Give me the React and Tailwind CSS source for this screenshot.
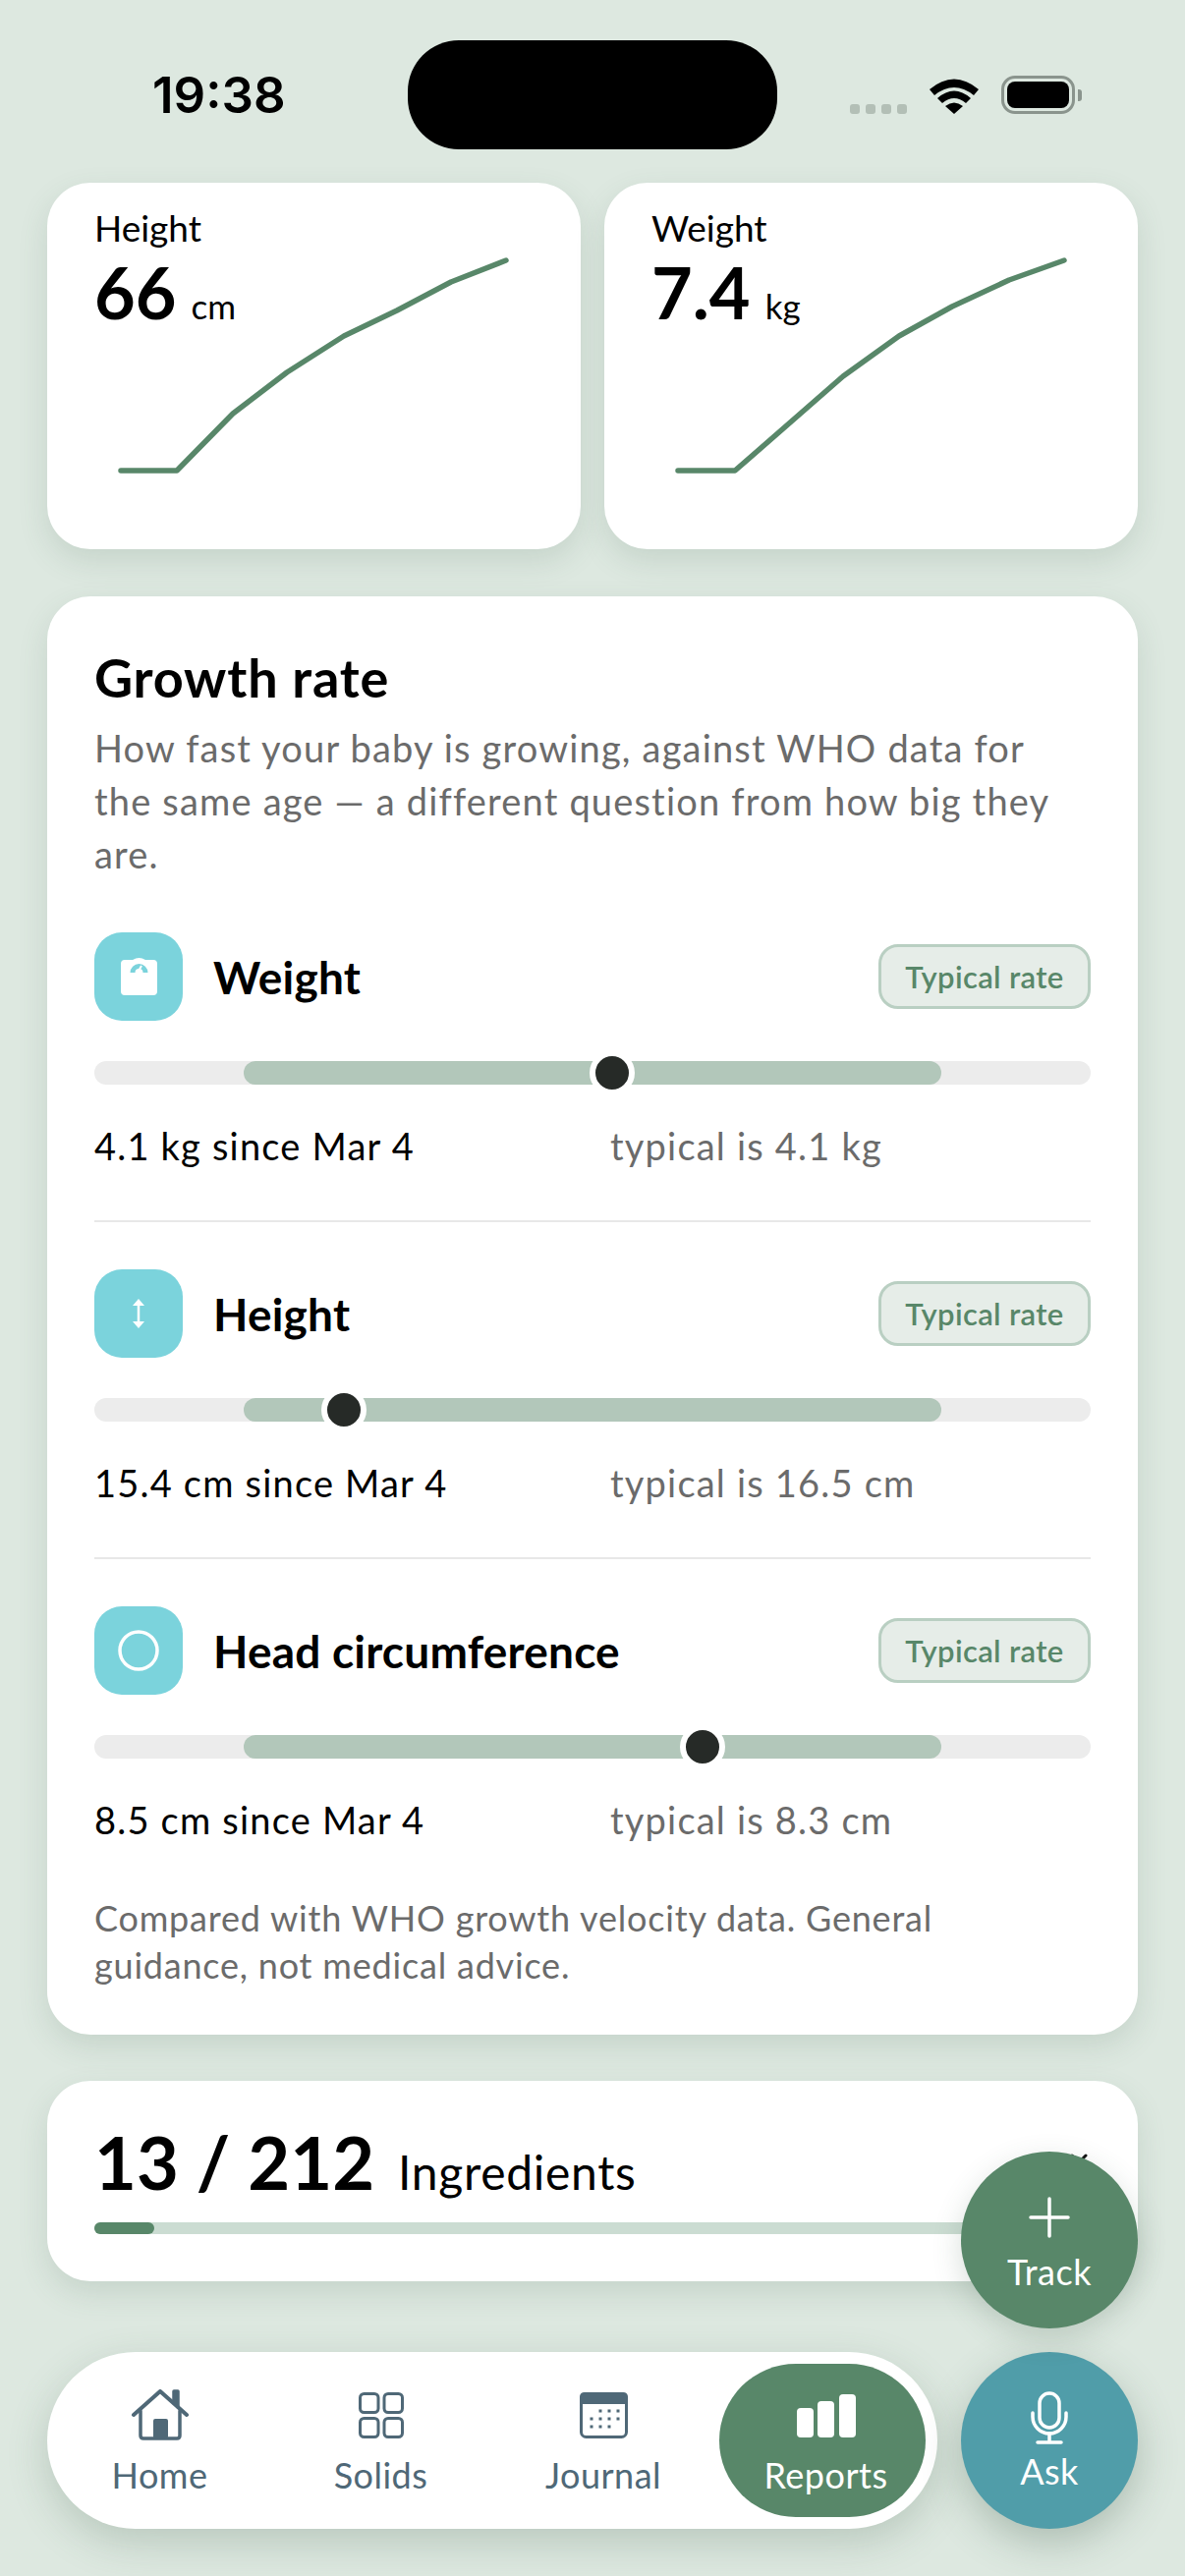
import React from 'react'

const GREEN = '#588769'

function StatusBar() {
  return (
    <div className="flex h-[111px] mt-[41px] mb-[34px] pl-[155px] items-center">
      <span className="w-[260px] mt-[2px] text-[51px] font-semibold text-black font-['Inter',sans-serif]">19:38</span>
      <div className="w-[376px] h-[111px] rounded-[52px] bg-black" />
      <div className="flex gap-[6px] ml-[74px] mt-[29px]">
        <span className="w-[10px] h-[10px] rounded-[3px] bg-[#b3bfb6]" />
        <span className="w-[10px] h-[10px] rounded-[3px] bg-[#b3bfb6]" />
        <span className="w-[10px] h-[10px] rounded-[3px] bg-[#b3bfb6]" />
        <span className="w-[10px] h-[10px] rounded-[3px] bg-[#b3bfb6]" />
      </div>
      <svg width="52" height="38" viewBox="0 0 52 38" className="ml-[22px] mt-[1px]">
        <path d="M1 13 Q26 -8 51 13 L46 19 Q26 3 6 19 Z" fill="#000" />
        <path d="M9 22 Q26 7 43 22 L38 27 Q26 17 14 27 Z" fill="#000" />
        <path d="M17 30 Q26 23 35 30 L26 38 Z" fill="#000" />
      </svg>
      <div className="flex items-center ml-[22px]">
        <div className="w-[75px] h-[39px] rounded-[14px] border-[3px] border-[#8a948d] p-[3px]">
          <div className="w-full h-full rounded-[8px] bg-black" />
        </div>
        <div className="w-[4px] h-[12px] ml-[3px] rounded-r-[3px] bg-[#8a948d]" />
      </div>
    </div>
  )
}

function StatCard({ label, value, unit, points }) {
  return (
    <div className="relative flex-1 h-[373px] rounded-[44px] bg-white pl-[48px] pt-[21px] shadow-[0_12px_30px_rgba(70,100,80,0.15)]">
      <div className="text-[37px] leading-[50px] text-black">{label}</div>
      <div className="flex items-baseline gap-[15px] leading-[80px] text-black">
        <span className="text-[72px] font-bold">{value}</span>
        <span className="text-[35px]">{unit}</span>
      </div>
      <svg viewBox="0 0 543 373" className="absolute inset-0 w-full h-full" fill="none">
        <polyline points={points} stroke={GREEN} strokeWidth="5.5" strokeLinecap="round" strokeLinejoin="round" />
      </svg>
    </div>
  )
}

function WeightIcon() {
  return (
    <svg width="37" height="38" viewBox="0 0 37 38" fill="none">
      <path d="M4 2 H12 Q18.5 -2 25 2 H33 Q37 2 37 6 V34 Q37 38 33 38 H4 Q0 38 0 34 V6 Q0 2 4 2 Z" fill="#fff" />
      <path d="M12 15 A6.5 6.5 0 0 1 25 15" stroke="#7bd3dc" strokeWidth="5" />
      <path d="M17 15 L21 8" stroke="#fff" strokeWidth="2" />
    </svg>
  )
}

function HeightIcon() {
  return (
    <svg width="14" height="30" viewBox="0 0 14 30">
      <path d="M7 0 L13 7 H1 Z M7 30 L13 23 H1 Z" fill="#fff" />
      <path d="M7 5 V25" stroke="#fff" strokeWidth="2.5" />
    </svg>
  )
}

function CircleIcon() {
  return (
    <svg width="42" height="42" viewBox="0 0 42 42" fill="none">
      <circle cx="21" cy="21" r="19" stroke="#fff" strokeWidth="3.5" />
    </svg>
  )
}

function RateRow({ icon, title, pct, left, right }) {
  return (
    <div>
      <div className="flex items-center justify-between h-[90px]">
        <div className="flex items-center gap-[31px]">
          <div className="flex w-[90px] h-[90px] items-center justify-center rounded-[28px] bg-[#7bd3dc]">{icon}</div>
          <span className="text-[46px] font-bold text-black tracking-[0.2px]">{title}</span>
        </div>
        <div className="flex w-[216px] h-[66px] items-center justify-center rounded-[20px] border-[3px] border-[#b9cfc2] bg-[#e6ede8] text-[31px] font-semibold text-[#588769] tracking-[0.35px]">Typical rate</div>
      </div>
      <div className="relative h-[24px] mt-[41px] rounded-full bg-[#ececec]">
        <div className="absolute left-[15%] right-[15%] top-0 bottom-0 rounded-full bg-[#b2c7ba]" />
        <div className="absolute top-[-11px] w-[46px] h-[46px] -ml-[23px] rounded-full border-[6px] border-white bg-[#262a27]" style={{ left: `${pct}%` }} />
      </div>
      <div className="grid grid-cols-2 gap-[36px] mt-[37px] text-[38px] leading-[50px] tracking-[1.2px]">
        <span className="text-black">{left}</span>
        <span className="text-[#6b6b6b]">{right}</span>
      </div>
    </div>
  )
}

function HomeIcon() {
  return (
    <svg width="60" height="52" viewBox="0 0 60 52" fill="none" stroke="#4f6877" strokeWidth="3.5" strokeLinecap="round" strokeLinejoin="round">
      <path d="M3 26 L30 2 L57 26" strokeWidth="4" />
      <path d="M10 22 V47 Q10 50 13 50 H47 Q50 50 50 47 V22" />
      <path d="M44 14 V2 H48 V18" fill="#4f6877" />
      <rect x="23" y="30" width="15" height="20" rx="2" fill="#4f6877" stroke="none" />
    </svg>
  )
}

function SolidsIcon() {
  return (
    <svg width="46" height="47" viewBox="0 0 46 47" fill="none" stroke="#4f6877" strokeWidth="3" className="mt-[3px]">
      <rect x="1.5" y="1.5" width="18.5" height="19" rx="4" />
      <rect x="26" y="1.5" width="18.5" height="19" rx="4" />
      <rect x="1.5" y="26.5" width="18.5" height="19" rx="4" />
      <rect x="26" y="26.5" width="18.5" height="19" rx="4" />
    </svg>
  )
}

function JournalIcon() {
  const dots = [[21, 19], [30, 19], [39, 19], [12, 27], [21, 27], [30, 27], [39, 27], [12, 35], [21, 35], [30, 35]]
  return (
    <svg width="49" height="47" viewBox="0 0 49 47" fill="none" className="mt-[3px]">
      <rect x="1.5" y="1.5" width="46" height="44" rx="5" stroke="#4f6877" strokeWidth="3" />
      <path d="M5 0 H44 Q49 0 49 5 V12 H0 V5 Q0 0 5 0 Z" fill="#4f6877" />
      {dots.map(([x, y]) => (
        <rect key={`${x}-${y}`} x={x - 1.5} y={y - 1.5} width="3" height="3" fill="#4f6877" />
      ))}
    </svg>
  )
}

function ReportsIcon() {
  return (
    <svg width="60" height="44" viewBox="0 0 60 44" fill="#fff" className="mt-[5px]">
      <rect x="0" y="14" width="17" height="30" rx="4" />
      <rect x="21" y="7" width="17" height="37" rx="4" />
      <rect x="43" y="0" width="17" height="44" rx="4" />
    </svg>
  )
}

function NavItem({ icon, label, extra }) {
  return (
    <div className={`flex flex-col items-center w-[225px] h-[156px] pt-[26px] text-[36px] leading-[44px] tracking-[0.5px] text-[#4f6877] ${extra || ''}`}>
      <div className="flex h-[54px] items-start">{icon}</div>
      <span className="mt-[11px]">{label}</span>
    </div>
  )
}

export default function App() {
  return (
    <div className="relative w-[1206px] h-[2622px] overflow-hidden bg-[#dde8e0] font-['Lato',sans-serif]">
      <StatusBar />

      <div className="flex gap-[24px] mx-[48px]">
        <StatCard label="Height" value="66" unit="cm" points="75,293 132,293 189,235 244,193 302,156 356,130 411,101 467,79" />
        <StatCard label="Weight" value="7.4" unit="kg" points="75,293 133,293 243,197 300,156 354,126 412,99 468,79" />
      </div>

      {/* Growth rate */}
      <div className="mx-[48px] mt-[48px] h-[1464px] rounded-[44px] bg-white px-[48px] pt-[53px] shadow-[0_12px_30px_rgba(70,100,80,0.15)]">
        <h2 className="text-[54px] leading-[60px] font-bold text-black tracking-[0.8px]">Growth rate</h2>
        <p className="mt-[14px] max-w-[985px] text-[38px] leading-[54px] text-[#6b6b6b] tracking-[1.18px]">How fast your baby is growing, against WHO data for the same age — a different question from how big they are.</p>
        <div className="mt-[53px]">
          <RateRow icon={<WeightIcon />} title="Weight" pct={52} left="4.1 kg since Mar 4" right="typical is 4.1 kg" />
          <div className="h-[2px] mt-[51px] mb-[48px] bg-[#e8e8e8]" />
          <RateRow icon={<HeightIcon />} title="Height" pct={25} left="15.4 cm since Mar 4" right="typical is 16.5 cm" />
          <div className="h-[2px] mt-[51px] mb-[48px] bg-[#e8e8e8]" />
          <RateRow icon={<CircleIcon />} title="Head circumference" pct={61} left="8.5 cm since Mar 4" right="typical is 8.3 cm" />
        </div>
        <p className="mt-[51px] max-w-[960px] text-[36px] leading-[48px] text-[#6b6b6b] tracking-[0.8px]">Compared with WHO growth velocity data. General guidance, not medical advice.</p>
      </div>

      {/* Ingredients */}
      <div className="mx-[48px] mt-[47px] h-[204px] rounded-[44px] bg-white px-[48px] pt-[38px] shadow-[0_12px_30px_rgba(70,100,80,0.15)]">
        <div className="flex items-baseline justify-between h-[90px] leading-[90px]">
          <div className="flex items-baseline gap-[24px] text-black">
            <span className="text-[74px] font-bold">13 / 212</span>
            <span className="text-[48px] tracking-[0.7px]">Ingredients</span>
          </div>
          <svg width="20" height="12" viewBox="0 0 20 12" fill="none" stroke="#111" strokeWidth="3" strokeLinecap="round" strokeLinejoin="round" className="self-start mt-[35px] mr-[2px]">
            <path d="M3 3 L10 10 L17 3" />
          </svg>
        </div>
        <div className="h-[12px] mt-[16px] rounded-full bg-[#cbdcd2]">
          <div className="w-[6%] h-full rounded-full bg-[#588769]" />
        </div>
      </div>

      {/* Bottom nav */}
      <div className="flex gap-[24px] mt-[72px] ml-[48px]">
        <div className="flex items-center w-[906px] h-[180px] rounded-[90px] bg-white pl-[2px] shadow-[0_14px_40px_rgba(60,90,70,0.22)]">
          <NavItem icon={<HomeIcon />} label="Home" />
          <NavItem icon={<SolidsIcon />} label="Solids" />
          <NavItem icon={<JournalIcon />} label="Journal" extra="pl-[3px]" />
          <div className="flex flex-col items-center w-[210px] h-[156px] pt-[26px] pl-[7px] ml-[7px] rounded-[78px] bg-[#588769] text-[36px] leading-[44px] tracking-[0.5px] text-white">
            <div className="flex h-[54px] items-start"><ReportsIcon /></div>
            <span className="mt-[11px]">Reports</span>
          </div>
        </div>
        <div className="flex flex-col items-center w-[180px] h-[180px] pt-[40px] rounded-full bg-[#509da9] text-[36px] leading-[44px] tracking-[0.5px] text-white shadow-[0_14px_40px_rgba(60,90,70,0.3)]">
          <svg width="38" height="54" viewBox="0 0 38 54" fill="none" stroke="#fff" strokeWidth="3.5" strokeLinecap="round">
            <rect x="9" y="2" width="20" height="35" rx="10" />
            <path d="M2 22 V26 A17 17 0 0 0 36 26 V22" />
            <path d="M19 43 V52 M7 52 H31" />
          </svg>
          <span className="mt-[5px]">Ask</span>
        </div>
      </div>

      {/* Track button sits over the ingredients card */}
      <div className="absolute left-[978px] top-[2190px] flex flex-col items-center w-[180px] h-[180px] pt-[46px] rounded-full bg-[#588769] text-[36px] leading-[44px] tracking-[0.5px] text-white shadow-[0_10px_30px_rgba(60,90,70,0.2)]">
        <svg width="42" height="42" viewBox="0 0 42 42" fill="none" stroke="#fff" strokeWidth="3.5" strokeLinecap="round">
          <path d="M21 2 V40 M2 21 H40" />
        </svg>
        <span className="mt-[12px]">Track</span>
      </div>
    </div>
  )
}
